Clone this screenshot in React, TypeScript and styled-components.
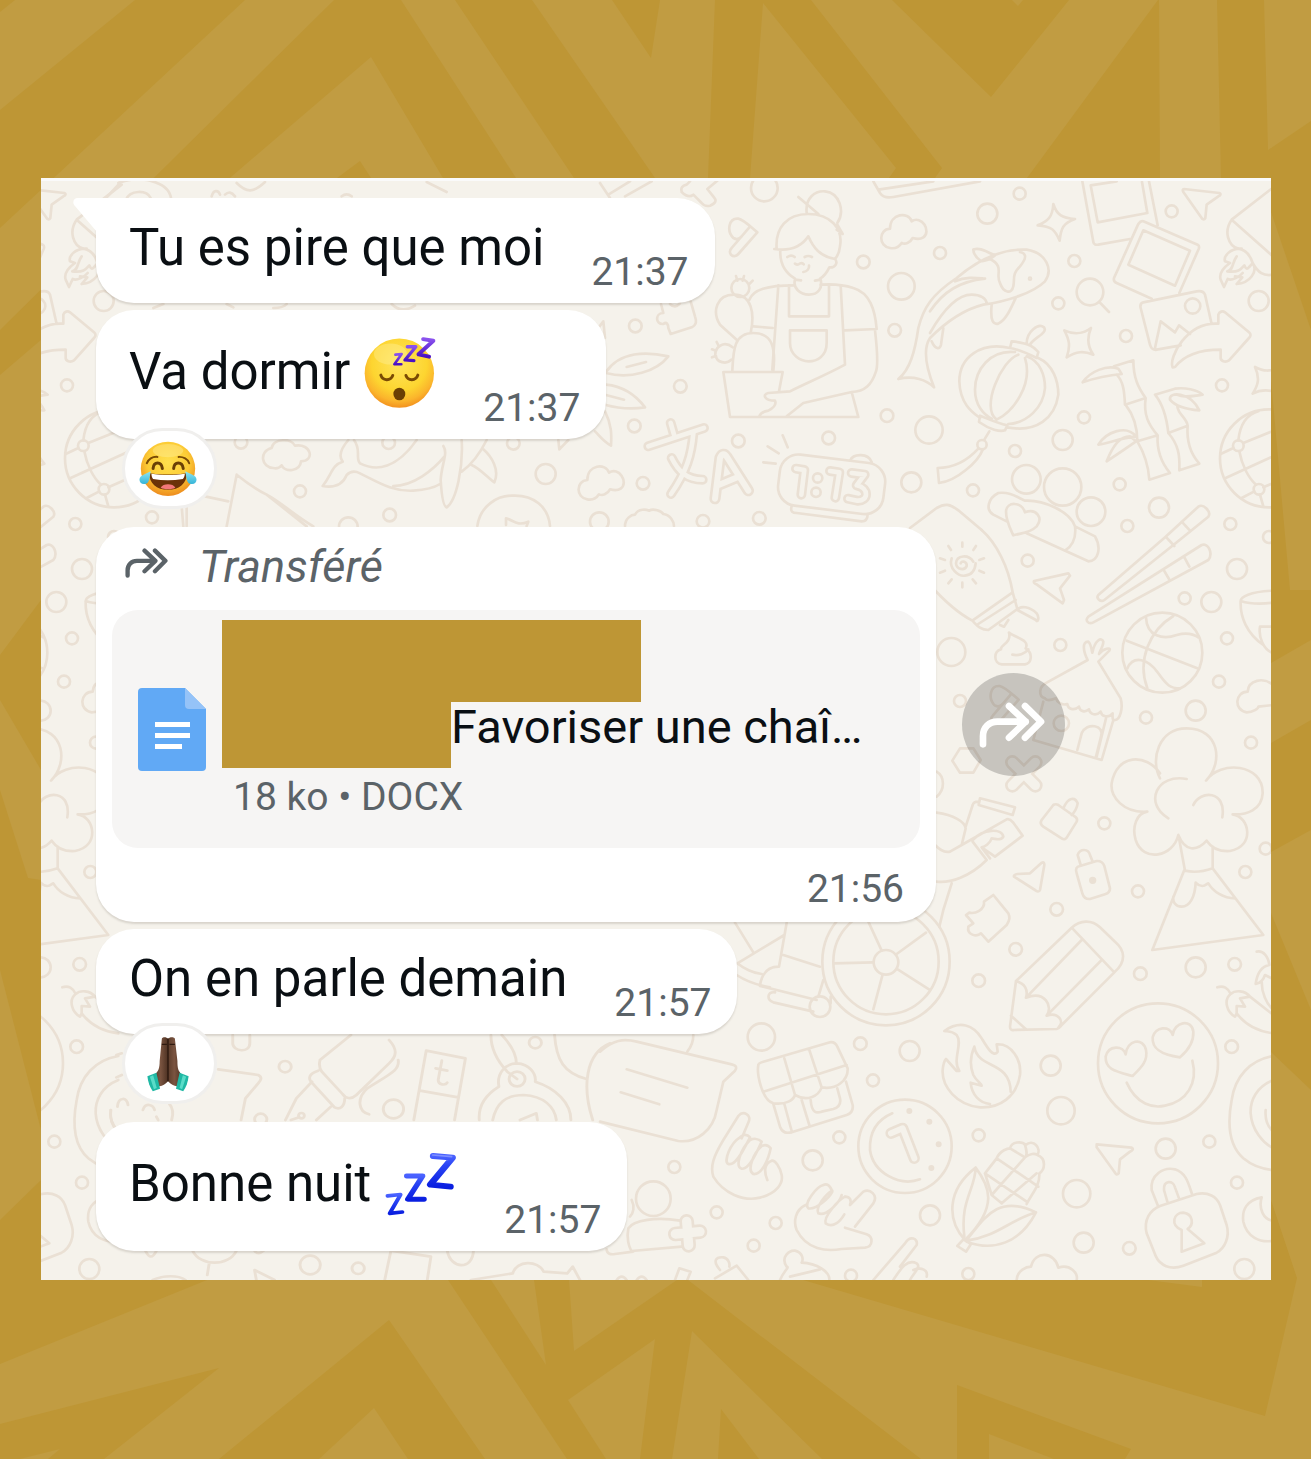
import React from "react";
import styled, { createGlobalStyle } from "styled-components";

const GOLD = "#be9635";
const GOLD_LIGHT = "#c19c42";
const PAPER = "#f5f2eb";
const DOODLE = "#eae0d4";
const INK = "#0a0f13";
const MUTED = "#5b6368";

const GlobalStyle = createGlobalStyle`
  *, *::before, *::after { box-sizing: border-box; }
  body { margin: 0; background: ${GOLD}; font-family: Roboto, "Liberation Sans", sans-serif; }
`;

const Page = styled.main`
  position: relative;
  min-height: 100vh;
  padding: 178px 40px 179px 41px;
  background: ${GOLD};
  overflow: hidden;
`;

const Backdrop = styled.svg`
  position: absolute;
  inset: 0;
  width: 100%;
  height: 100%;
`;

const Chat = styled.section`
  position: relative;
  padding: 20px 16px 29px 55px;
  background: ${PAPER};
  overflow: hidden;
`;

const Wallpaper = styled.svg`
  position: absolute;
  inset: 0;
  width: 100%;
  height: 100%;
  border-top: 3px solid #fafafa;
`;

const Thread = styled.ol`
  position: relative;
  display: flex;
  flex-direction: column;
  gap: 7px;
  margin: 0;
  padding: 0;
  list-style: none;
`;

const Row = styled.li<{ $reacted?: boolean }>`
  display: flex;
  align-items: center;
  gap: 26px;
  margin-bottom: ${(p) => (p.$reacted ? 81 : 0)}px;
`;

const bubbleShadow = "0 2px 2px rgba(120, 110, 95, 0.22)";

const Bubble = styled.article<{ $first?: boolean }>`
  position: relative;
  display: flex;
  align-items: flex-end;
  gap: 47px;
  padding: 20px 26px 8px 33px;
  border-radius: ${(p) => (p.$first ? "0 38px 38px 38px" : "38px")};
  background: #fff;
  box-shadow: ${bubbleShadow};
`;

const Tail = styled.svg`
  position: absolute;
  top: 0;
  left: -23px;
  width: 24px;
  height: 36px;
`;

const Message = styled.p<{ $tall?: boolean }>`
  display: flex;
  align-items: center;
  gap: 14px;
  min-height: ${(p) => (p.$tall ? 84 : 60)}px;
  margin: 0 0 17px;
  color: ${INK};
  font-size: 51px;
  line-height: 60px;
  white-space: nowrap;
`;

const Time = styled.time`
  color: ${MUTED};
  font-size: 39px;
  line-height: 46px;
`;

const Reaction = styled.button`
  position: absolute;
  top: calc(100% - 11px);
  left: 26px;
  display: flex;
  align-items: center;
  justify-content: center;
  width: 95px;
  height: 81px;
  padding: 0 3px 0 0;
  border: 3px solid #f0efed;
  border-radius: 41px;
  background: #fff;
`;

const FileBubble = styled.article`
  flex: 0 1 840px;
  min-width: 0;
  padding: 0 16px;
  border-radius: 38px;
  background: #fff;
  box-shadow: ${bubbleShadow};
`;

const Forwarded = styled.header`
  display: flex;
  align-items: center;
  gap: 31px;
  padding: 0 13px 4px;
  color: ${MUTED};
  font-size: 45px;
  font-style: italic;
  line-height: 79px;

  svg { margin-top: -8px; }
`;

const FileCard = styled.a`
  display: flex;
  align-items: center;
  gap: 16px;
  padding: 10px 26px 22px;
  border-radius: 26px;
  background: #f6f5f4;
  color: ${INK};
  text-decoration: none;
`;

const FileIcon = styled.svg`
  flex: none;
  width: 68px;
  height: 83px;
  margin-top: 12px;
`;

const FileInfo = styled.div`
  flex: 1;
  min-width: 0;
`;

const Redaction = styled.div<{ $width: number; $height: number }>`
  flex: none;
  width: ${(p) => p.$width}px;
  height: ${(p) => p.$height}px;
  background: ${GOLD};
`;

const FileName = styled.div`
  display: flex;
  font-size: 47px;
  line-height: 50px;
  white-space: nowrap;
`;

const FileMeta = styled.div`
  padding-left: 11px;
  color: ${MUTED};
  font-size: 39px;
  line-height: 58px;
`;

const FileFooter = styled.footer`
  display: flex;
  justify-content: flex-end;
  padding: 18px 16px 10px;
`;

const ForwardButton = styled.button`
  display: flex;
  flex: none;
  align-items: center;
  justify-content: center;
  width: 103px;
  height: 103px;
  padding: 0 3px 0 0;
  border: 0;
  border-radius: 50%;
  background: rgba(0, 0, 0, 0.19);
  color: #fff;
`;

function ForwardIcon({ width, height }: { width: number; height: number }) {
  return (
    <svg width={width} height={height} viewBox="150 513 198 138" fill="none" stroke="currentColor" strokeWidth="20" strokeLinecap="round" strokeLinejoin="round" aria-hidden="true">
      <path d="M162 640V615C162 590 180 572 205 572H290M240 525L290 572L240 620M288 525L336 572L288 620" />
    </svg>
  );
}

function SleepingEmoji() {
  return (
    <svg width="72" height="73" viewBox="970 468 218 220" role="img" aria-label="😴">
      <defs>
        <radialGradient id="sleepFace" cx=".5" cy=".36" r=".66">
          <stop offset="0" stopColor="#ffe45c" />
          <stop offset=".6" stopColor="#fdd530" />
          <stop offset=".82" stopColor="#fbb52c" />
          <stop offset="1" stopColor="#f18a1c" />
        </radialGradient>
        <linearGradient id="sleepZ" x1="0" y1="0" x2="0" y2="1">
          <stop offset="0" stopColor="#8a52ee" />
          <stop offset="1" stopColor="#4a10c4" />
        </linearGradient>
      </defs>
      <circle cx="1077" cy="580" r="105" fill="url(#sleepFace)" />
      <ellipse cx="1050" cy="522" rx="50" ry="32" fill="#fff3a8" opacity=".35" />
      <path d="M1021 586C1026 603 1050 605 1057 587M1097 587C1103 604 1127 604 1133 586" fill="none" stroke="#7a4a04" strokeWidth="9" strokeLinecap="round" />
      <ellipse cx="1077" cy="643" rx="18" ry="19" fill="#6b3f04" />
      <g fill="none" stroke="url(#sleepZ)" strokeLinejoin="round" strokeLinecap="round">
        <path strokeWidth="8" d="M1065 524L1084 522L1062 553L1083 553" />
        <path strokeWidth="10" d="M1101 500L1127 500L1094 540L1121 542" />
        <path strokeWidth="12" d="M1149 477L1180 482L1135 523L1167 530" />
      </g>
    </svg>
  );
}

function JoyEmoji() {
  return (
    <svg width="58" height="56" viewBox="299 793 174 169" role="img" aria-label="😂">
      <defs>
        <radialGradient id="joyFace" cx=".5" cy=".38" r=".64">
          <stop offset="0" stopColor="#ffe04e" />
          <stop offset=".6" stopColor="#fccb35" />
          <stop offset="1" stopColor="#ec861c" />
        </radialGradient>
        <linearGradient id="tear" x1="0" y1="0" x2="0" y2="1">
          <stop offset="0" stopColor="#8ee6f3" />
          <stop offset="1" stopColor="#35b4d8" />
        </linearGradient>
      </defs>
      <circle cx="386" cy="877" r="82" fill="url(#joyFace)" />
      <ellipse cx="386" cy="822" rx="46" ry="20" fill="#fff0a0" opacity=".4" />
      <path d="M322 860C328 848 340 840 354 841M418 841C432 840 446 848 450 860" fill="none" stroke="#7a4a04" strokeWidth="6" strokeLinecap="round" />
      <path d="M341 876C343 854 366 854 369 876M403 876C405 854 429 854 432 876" fill="none" stroke="#6a4006" strokeWidth="9" strokeLinecap="round" />
      <path d="M330 890C360 895 412 895 442 890C444 920 420 940 386 940C352 940 328 920 330 890Z" fill="#6b3208" />
      <path d="M336 892C366 897 406 897 437 892C436 900 434 904 431 908C400 913 370 913 341 908C338 904 336 899 336 892Z" fill="#fff" />
      <path d="M364 934C370 920 402 920 408 934C398 940 374 940 364 934Z" fill="#f27879" />
      <path d="M334 884C330 900 332 922 315 923C300 924 296 908 304 900C312 892 324 890 334 884Z" fill="url(#tear)" />
      <path d="M438 884C442 900 440 922 457 923C472 924 476 908 468 900C460 892 448 890 438 884Z" fill="url(#tear)" />
    </svg>
  );
}

function PrayEmoji() {
  return (
    <svg width="42" height="56" viewBox="296 50 116 168" preserveAspectRatio="none" role="img" aria-label="🙏🏿">
      <defs>
        <linearGradient id="skin" x1="0" y1="0" x2="1" y2="0">
          <stop offset="0" stopColor="#5b3d2c" />
          <stop offset=".45" stopColor="#7a5440" />
          <stop offset="1" stopColor="#4c3122" />
        </linearGradient>
      </defs>
      <path d="M337 58C338 52 350 52 354 58V186C345 196 336 203 327 200L317 166C328 156 331 146 331 125Z" fill="url(#skin)" />
      <path d="M373 58C372 52 358 52 354 58V186C363 196 374 203 383 200L393 166C382 156 380 146 380 125Z" fill="url(#skin)" />
      <path d="M354 58V186M337 75H351M358 75H373" fill="none" stroke="#2e1a10" strokeWidth="4" />
      <path d="M297 171L322 160L332 208L312 216C303 203 299 187 297 171Z" fill="#1fb8a4" />
      <path d="M411 171L386 160L376 208L396 216C405 203 409 187 411 171Z" fill="#1fb8a4" />
      <path d="M304 172L313 168L323 206L315 210ZM404 172L395 168L386 206L393 210Z" fill="#5adcc8" />
    </svg>
  );
}

function ZzzEmoji() {
  return (
    <svg width="72" height="64" viewBox="954 385 199 194" preserveAspectRatio="none" role="img" aria-label="💤">
      <defs>
        <linearGradient id="zBlue" x1="0" y1="0" x2="0" y2="1">
          <stop offset="0" stopColor="#4a62ff" />
          <stop offset=".3" stopColor="#2a45f5" />
          <stop offset="1" stopColor="#0a1fe0" />
        </linearGradient>
      </defs>
      <g fill="none" stroke="url(#zBlue)" strokeLinejoin="round" strokeLinecap="round">
        <path strokeWidth="11" d="M961 518L997 514L967 571L1002 567" />
        <path strokeWidth="15" d="M1014 458L1058 458L1017 528L1062 528" />
        <path strokeWidth="18" d="M1087 397L1141 402L1079 484L1135 490" />
      </g>
      <path d="M1086 394L1138 399" stroke="#7d8fff" strokeWidth="5" strokeLinecap="round" />
    </svg>
  );
}

type Dot = [number, number, number];

function Rings({ at }: { at: Dot[] }) {
  return (
    <>
      {at.map(([x, y, r]) => (
        <circle key={`${x}-${y}`} cx={x} cy={y} r={r} />
      ))}
    </>
  );
}

/* A rounded stroke with a hollow middle, used for doodled letters and crosses. */
function Hollow({ d, size = 36 }: { d: string; size?: number }) {
  return (
    <>
      <path d={d} strokeWidth={size} />
      <path d={d} strokeWidth={size - 16} stroke={PAPER} />
    </>
  );
}

const Mallet = () => <path d="M400 180C380 160 385 120 415 122C430 125 445 140 472 163L415 228C400 245 380 225 395 210L448 148M400 180q15 8 25-5" />;
const Cloud = () => <path d="M870 210C835 205 835 155 870 152C870 105 925 100 935 130C965 110 995 160 970 178C960 185 945 182 938 180C930 195 915 200 905 195C895 210 880 212 870 210Z" />;

function GardenDoodles() {
  return (
    <g transform="translate(600 178) scale(.333333)">
      <Rings at={[[493, 30, 40], [790, 252, 19], [904, 325, 40], [884, 457, 19], [106, 444, 19], [241, 625, 19], [103, 744, 19], [415, 789, 19], [686, 780, 19], [861, 713, 19], [987, 756, 41], [934, 913, 30], [129, 916, 19], [478, 1021, 19], [309, 1030, 19], [421, 330, 27]]} />
      <path d="M398 508C370 485 345 510 346 530C350 555 380 560 394 545" />
      <path d="M25 50L90 10M75 55L155 10M0 15L30 60M245 40q-5-15 15-20l10-10M245 42q20 20 35 8l25 25q10 12 25 8q25-10 12-25l-20-25 30-25" />
      <path d="M820 10L840 45C850 60 865 60 880 57L1140 10M835 35L1000 10" />
      <Mallet />
      <Cloud />
      <path d="M620 105C615 60 645 38 675 40C720 45 735 100 712 135M595 57L655 108M530 212C525 150 560 108 625 108C690 108 730 150 720 205C718 222 712 235 705 243C660 235 640 210 625 175C605 205 570 220 523 213M712 140L728 168L710 155M541 215C538 265 565 290 585 302M705 243C715 255 705 270 688 268C680 285 672 295 660 302M603 307L585 305C578 330 600 350 627 350C655 350 668 330 662 305L645 308M562 237q12-8 22 0M614 237q10-6 22 0M585 257q8 6 14 0q8-4 12 2M610 282C622 280 628 272 627 263" />
      <path d="M448 365C460 335 500 322 583 322M662 320C690 318 730 320 760 330C810 345 825 395 830 453L735 457M535 322L517 575M567 322V415H687V320M722 322L735 560C680 590 620 615 570 640L505 645C485 650 495 668 525 668C530 680 520 690 505 698C490 700 482 705 478 715M825 457C830 500 835 560 828 580C815 620 795 640 755 642L610 675L560 715M755 642L775 717H390L370 582H548L537 640M460 445L518 450M570 457H680V495C680 535 650 550 626 550C600 550 570 530 570 495Z" />
      <path d="M410 485L360 440C335 400 350 350 402 350C455 350 465 405 452 465M397 578C400 520 400 465 460 465C520 465 527 515 520 578M408 294l4 14M432 294l-4 14M458 308l-10 10M350 492l6 12M336 514l12 4M336 538l12-4" />
      <path d="M183 378L190 405C165 405 165 440 190 438C200 430 205 440 205 450L212 468L275 448C290 440 290 430 285 415L272 370M210 378q15 15 30-2" />
      <path d="M18 582C60 520 140 520 205 535C170 580 90 605 18 585M80 567L138 552M18 620C70 625 110 655 135 688C90 695 50 690 15 680M15 650L72 665M15 700C35 740 35 770 33 803C10 790 0 775-15 760M-5 450L10 430L15 480" />
      <Hollow size={30} d="M145 805L312 750M212 735L222 770M280 765C275 830 260 880 213 948M215 840C235 880 260 905 308 905" />
      <Hollow size={34} d="M345 962L360 840C366 826 374 826 380 836L445 938M358 920L412 898" />
      <rect x="536" y="842" width="318" height="154" rx="56" transform="rotate(7 695 918)" />
      <path d="M750 848C760 825 805 825 815 852M575 985C570 1000 578 1005 590 1005L785 1030C800 1030 803 1018 803 1008M548 772L563 808M503 805L536 826M490 853L527 857" />
      <circle cx="653" cy="900" r="14" /><circle cx="648" cy="943" r="14" />
      <Hollow size={30} d="M588 872L613 876L604 950M690 879L718 883L706 959M755 885L794 890L770 922C808 930 806 970 772 968L744 962" />
      <path d="M75 1045C75 1020 95 1010 105 1010C115 990 140 995 148 998C160 990 185 1000 190 1008C210 1010 222 1030 222 1045" />
    </g>
  );
}

function LanternDoodles() {
  return (
    <g transform="translate(930 178) scale(.333333)">
      <Rings at={[[269, 47, 18], [172, 107, 30], [30, 225, 18], [433, 249, 18], [385, 376, 18], [588, 474, 18], [725, 100, 18], [986, 369, 30], [876, 622, 18], [462, 718, 18], [398, 786, 30], [255, 819, 18], [129, 937, 18], [569, 919, 18], [687, 989, 30], [592, 1044, 18], [901, 1038, 18], [480, 342, 40], [156, 800, 14], [788, 384, 23], [289, 904, 43], [398, 927, 56], [483, 1001, 43], [1017, 841, 147], [925, 803, 16], [987, 934, 16]]} />
      <path d="M508 372L537 402M-95 603C-60 575-45 520-35 450C-20 390 5 350 80 300C150 240 220 212 290 215C350 225 370 275 345 310C310 345 230 370 160 380C100 395 40 440 0 480C-20 510-15 560 12 628C-10 605-50 592-95 603M130 215C150 205 175 225 195 232L180 243C165 248 155 252 150 247C135 235 130 225 130 215M75 310C110 295 140 300 165 302C90 310 40 340 0 400M0 465C20 430 70 350 125 350C150 350 170 360 170 378M185 380C180 430 190 440 205 437C230 425 245 385 258 358M180 243C225 265 195 290 210 315C220 345 245 350 250 325C255 300 245 290 270 265C295 235 285 225 270 222M5 490C15 515 30 515 33 500L40 450" />
      <circle cx="300" cy="302" r="3" />
      <path d="M240 510C150 490 88 540 88 610C90 680 130 705 150 720M325 540C370 560 385 610 385 650C375 720 320 765 232 748M255 522C180 515 135 575 135 635C135 680 160 710 185 722M290 535C330 550 345 590 345 630C340 690 290 735 235 738M265 530C215 545 150 690 200 725C250 700 310 620 285 540M240 510L245 490C300 495 315 510 325 522L320 540C300 530 270 515 240 510ZM290 497C290 460 325 435 342 448C355 465 310 480 300 500M150 713L147 732C180 755 210 762 225 757L232 742C200 735 180 725 150 713ZM178 760L163 785M145 812C110 850 70 870 23 870L27 915C80 910 145 850 158 815" />
      <path d="M370 78C380 110 395 120 435 123C400 135 393 150 389 188C375 155 365 145 323 142C355 130 368 115 370 78ZM403 457C430 470 460 468 483 450C470 480 472 505 490 530C460 518 440 520 410 538C422 505 418 485 403 457ZM1050 565C1020 583 1000 580 975 567C990 600 985 620 968 647C990 635 1010 635 1030 640" />
      <path d="M457 10L490 192C491 200 498 201 505 200L600 183M657 10L683 142M560 10L482 22L503 133L652 105L636 12M640 130L803 200C808 203 808 208 806 213L748 345M640 130C630 127 628 135 624 140L552 300C550 308 553 312 560 315L665 362M640 157L780 218L735 323L595 260ZM845 438L825 350C822 342 812 338 800 340L640 373C633 375 630 382 632 390L660 500C663 512 672 517 680 515L752 502M675 510L692 430L735 463L747 442L780 468M728 568C715 540 770 430 865 437V410C868 400 878 398 885 403L957 463C963 468 963 474 957 480L897 547C885 555 872 548 872 540V515C800 515 760 535 735 567Z" />
      <path d="M762 33L868 45C875 48 870 53 865 55L830 80L826 120C822 127 817 123 815 120L760 42C757 36 758 33 762 33Z" />
      <path d="M1040 20L905 125C880 160 895 205 925 212M905 125L1040 245M935 212C900 210 880 235 885 250L900 255C885 265 865 285 872 305L882 327L893 303C905 310 930 295 938 285M920 318C960 315 985 280 968 255C960 230 945 215 925 212M920 235C905 255 912 275 892 280C930 285 935 270 943 262C950 280 955 270 968 255M915 295L937 298L920 318M968 255C985 285 1000 295 1030 290" />
      <path d="M552 565L610 547C610 600 625 630 647 660L585 680C583 640 580 610 560 590M647 660C640 710 655 740 683 772L622 790C622 740 610 710 588 682M683 772C680 820 695 855 720 885L658 905C655 860 640 820 622 790M458 613C480 580 530 560 565 572L575 588C530 592 490 602 458 613M505 800C530 760 590 740 618 775C570 780 540 795 505 800ZM530 850C550 800 570 775 600 775L618 790C590 810 560 830 530 850M675 650L735 632M675 650C700 680 710 720 715 765L773 743C770 720 745 710 742 685M715 765C745 800 750 830 748 877L808 857C775 820 770 780 773 743M735 632C765 628 800 635 818 650C790 655 760 660 740 650M720 665C715 640 780 640 808 697C780 695 740 690 720 665Z" />
      <path d="M925 787C930 740 950 710 985 700M928 820C935 860 955 900 978 920M872 828L910 810M940 795L1120 722M887 900L1150 780M973 940L935 960M1000 928L1150 862M990 950L1000 985" />
      <path d="M230 1030L190 1010C165 995 175 960 205 945C240 940 265 960 285 968C340 965 420 1000 435 1045C440 1085 425 1105 405 1118M435 1045L495 1075C515 1110 505 1150 475 1150L290 1066M228 1000C230 970 275 970 285 1003C320 990 340 1020 320 1045C300 1065 275 1065 250 1072C240 1050 228 1030 228 1000" />
      <path d="M-60 1050L20 990C45 975 60 978 85 997L155 1056" />
    </g>
  );
}

function KiteDoodles() {
  return (
    <g transform="translate(930 530) scale(.333333)">
      <Rings at={[[293, 92, 18], [921, 117, 30], [764, 205, 18], [844, 216, 30], [891, 325, 18], [391, 345, 18], [64, 366, 42], [867, 455, 18], [797, 542, 30], [648, 563, 18], [963, 638, 18], [523, 880, 18], [624, 1084, 18], [946, 1026, 18], [1007, 956, 18], [394, 580, 23], [90, 513, 18], [1017, 21, 18], [697, 368, 120]]} />
      <path d="M505 195L707 20L805-70C820-80 845-55 835-40L733 43L523 210C512 218 497 205 505 195M707 20L733 48M755-25L780 2M475 260L815 45C835 38 850 70 835 90L490 277C475 285 463 270 475 260M700 118L717 147M762 80L778 110" />
      <path d="M155 0C200 40 235 110 248 187L127 272C85 250 45 215 0 165M248 187L262 237L175 300C150 300 140 285 127 272M257 210L140 285M262 240C270 225 300 230 320 250C330 265 322 280 318 270L262 240M210 285L222 290L235 270" />
      <path d="M92 100C95 90 112 95 110 108C105 122 80 120 78 100C80 75 115 72 130 95M65 85C55 115 85 140 105 137C125 135 135 120 137 100M97 38V50M97 158V172M30 85L45 90M30 128L45 122M148 90L162 85M148 122L162 128M55 48L63 60M138 48L130 60M55 160L65 148M138 160L128 148" />
      <path d="M415 130L312 153C310 158 315 162 320 163L398 220L402 210L390 175L420 137ZM237 308C260 325 300 330 287 355C310 370 305 400 285 403H215C190 400 190 365 213 358C210 345 245 340 237 308M247 374C265 378 285 372 295 358" />
      <path d="M1030 182C960 185 930 200 932 215C930 260 950 310 1000 345M932 213C960 222 1000 222 1030 218M1030 290L990 290C985 320 1000 360 1030 370" />
      <path d="M590 332L802 415M730 258C660 300 620 390 652 475M648 262C650 320 700 330 740 315C775 305 795 315 805 322M592 415C610 375 655 385 685 430C710 465 720 475 750 475" />
      <path d="M350 458L473 390C460 365 455 335 475 335C485 345 485 365 487 368C495 330 515 320 520 335C520 350 505 370 507 372C520 355 545 350 538 362L505 395L572 505C580 535 570 570 555 570C545 575 548 550 548 550C535 565 515 560 512 545C500 558 480 555 477 538C465 548 450 545 447 530C435 542 415 540 412 522C395 528 380 515 378 505C365 510 350 515 345 505C325 500 325 470 350 458ZM340 515L310 630L515 690L550 570M500 680L528 565M442 660L455 610C470 575 525 585 513 620L498 680" />
      <g transform="translate(-206 346)"><Mallet /></g>
      <path d="M90 655H130L152 690L130 728H90L67 692ZM20 725C45 740 45 780 20 800M1030 465C1000 440 955 450 953 485C915 485 910 540 950 547C970 547 985 535 985 530L1030 525" />
      <Hollow size={44} d="M247 697L316 766M316 697L247 766" />
      <path d="M690 745C660 690 685 595 770 595C870 595 880 700 828 752C870 690 1000 700 998 790C995 840 950 855 908 853C960 860 975 950 900 963C870 965 845 955 830 932C800 965 765 965 745 915C730 980 640 1000 617 930C605 890 620 850 652 845C580 850 540 800 545 760C560 670 650 670 690 730M770 747C680 730 640 820 715 865M790 825C810 780 890 780 877 862M748 930L765 1022C790 1028 820 1025 848 1015V950M762 1022L667 1260L1000 1215L848 1015M797 1058C820 1080 830 1060 835 1060C850 1085 880 1105 915 1105M797 1058C795 1100 780 1130 755 1130C735 1130 728 1115 730 1100" />
      <path d="M370 825L335 870C330 878 333 885 340 890L395 925C402 930 408 928 412 920L440 875C443 868 440 862 432 858L385 825C380 822 375 822 370 825M400 835C415 800 435 800 443 820C440 840 430 850 425 855M440 1030C435 1015 440 1010 450 1008L500 993C515 992 520 1000 523 1008L540 1075C540 1085 535 1090 525 1093L480 1107C468 1108 460 1100 457 1090ZM452 1005L443 975C450 955 475 955 480 975L488 995" />
      <circle cx="488" cy="1051" r="7" fill={DOODLE} />
      <path d="M20 848C70 855 105 875 107 895L95 945L60 965C40 970 25 955 15 945M107 890L128 825C130 818 138 815 145 815M150 805L255 832L248 855L146 825ZM95 945L230 868C240 865 245 872 250 878L278 917L195 980L155 952M128 935L170 990C120 1040 60 1060 20 1055M65 1060L40 1140L28 1190M128 930C160 895 215 895 220 920C210 935 195 925 185 925C180 940 165 950 155 952L180 985" />
      <path d="M252 1040C250 1035 258 1033 262 1032L300 1030L335 998C342 995 343 1000 343 1005L330 1080C328 1087 320 1085 315 1080Z" />
    </g>
  );
}

function SmileyDoodles() {
  return (
    <g transform="translate(930 900) scale(.333333)">
      <Rings at={[[380, 28, 19], [257, 148, 19], [146, 242, 19], [631, 221, 19], [797, 202, 30], [914, 193, 19], [905, 440, 19], [362, 497, 30], [393, 632, 41], [146, 706, 18], [707, 746, 30], [838, 725, 18], [921, 848, 18], [440, 881, 41], [461, 1028, 30], [598, 1045, 19], [943, 1107, 30], [115, 1122, 18], [0, 946, 30], [684, 490, 180]]} />
      <path d="M108 45L118 38C135 42 165 30 162 5L190-15L235 40C240 52 240 58 230 75L175 125L153 100C140 112 110 105 115 80L130 70Z" />
      <path d="M425 83L258 243L240 380C240 388 245 392 252 390L380 387C388 385 390 380 395 375L553 217C590 185 585 150 555 125L510 82C485 58 450 60 425 83L553 217M455 120L288 293C345 270 370 320 350 347C385 335 405 365 385 383M515 180L350 347M258 243C285 250 295 270 288 293M243 347L287 387" />
      <path d="M43 393C90 360 130 375 155 415C170 440 190 475 203 455L200 433C245 430 275 480 270 525C260 590 210 625 150 622C80 615 35 560 38 510C40 490 45 480 48 477L80 513L88 513C65 480 100 430 80 405C65 392 55 395 43 393ZM133 440C120 470 120 500 130 525C140 545 155 550 155 557L122 548C125 585 150 610 180 612M133 440C145 510 240 480 242 575" />
      <path d="M608 528C560 515 525 510 527 470C535 435 580 435 587 463C590 420 640 410 648 450C655 485 630 505 608 528ZM750 472C700 465 665 450 668 412C675 380 720 375 728 405C732 365 785 355 790 395C792 430 770 455 750 472ZM590 548C620 615 670 625 705 617C770 605 805 550 787 482" />
      <path d="M862 262C880 255 895 265 902 282C880 300 890 335 915 350L920 340C950 380 990 395 1030 400M902 282C915 270 945 270 960 290L930 295L945 320L920 318L920 345M960 290L1030 345M980 155C1000 150 1015 170 1018 195C990 200 980 230 977 252C990 250 1000 240 1005 225L1025 235M995 245C995 280 1010 310 1025 325" />
      <path d="M1030 468C960 480 915 530 905 600C890 680 900 740 940 775C970 800 1000 808 1030 810M1030 540C980 560 960 600 962 640C965 690 1000 730 1030 745M1007 630C1005 655 1010 675 1025 690" />
      <path d="M500 733L605 743C612 747 607 752 600 755L570 778L566 820C560 827 556 820 553 815L500 742ZM995 892C950 900 935 930 940 965C950 1010 990 1030 1030 1022M995 892C985 925 1000 960 1030 962" />
      <path d="M685 920L665 870C660 825 700 800 735 808C770 820 775 850 787 885M712 905L702 870C700 840 730 840 735 862L747 895M690 918L800 882C835 875 860 890 870 915L890 975C900 1010 885 1045 860 1058L760 1097C720 1112 690 1095 678 1070L650 1000C640 960 660 930 690 918ZM755 990C720 975 730 938 760 938C790 942 792 975 773 987L823 1030L755 1055Z" />
      <path d="M105 1020C50 960 50 870 137 803C180 860 205 920 105 1020ZM137 803C135 870 90 900 103 1010M110 1020C160 960 200 880 318 937C270 1030 190 1055 110 1025M318 937C240 960 200 1010 110 1022M100 1018L82 1038L108 1055L123 1032ZM165 820L200 775C210 750 235 745 240 745C245 725 275 722 287 735C310 715 335 745 322 765C350 775 345 810 328 820C330 860 305 880 290 912M165 820L185 885L215 910M240 745L285 772C300 760 315 760 322 765M285 772C295 765 285 735 285 735M200 775L325 860M165 820L290 905M285 772L185 885M320 820L215 910" />
      <path d="M260 1140C262 1110 290 1100 303 1100C315 1050 375 1055 385 1103C420 1090 445 1120 440 1140" />
    </g>
  );
}

function WheelDoodles() {
  return (
    <g transform="translate(600 900) scale(.333333)">
      <Rings at={[[858, 185, 191], [858, 185, 158], [858, 187, 37], [660, 320, 31], [484, 411, 41], [781, 431, 19], [929, 453, 30], [819, 541, 18], [718, 712, 18], [638, 781, 30], [223, 801, 18], [350, 937, 18], [527, 969, 18], [461, 1037, 18], [753, 1127, 18], [160, 896, 52], [915, 739, 140]]} />
      <path d="M845 152L805 65M890 162L978 98M893 208L987 268M848 223L820 328M820 187L702 190M405 68L460 157M560 68L537 200C500 200 485 225 480 255M412 190L553 105M412 190C430 205 460 220 485 222M410 225C440 245 470 255 510 262M550 165L660 200M480 258L650 300M640 335L520 307C500 300 500 275 525 277M670 240L655 290M692 290V310" />
      <path d="M0 455C40 420 70 415 110 425L395 493C412 497 410 505 405 512L370 545L350 630C340 690 290 730 235 723L0 665M80 508L262 563M62 577L178 613M280 405C280 425 270 445 262 455" />
      <path d="M475 495C470 520 485 600 520 610C560 615 580 600 585 585C620 605 655 590 665 562C710 570 745 540 743 505L712 440C705 425 695 425 685 428L490 485C480 488 475 492 475 495ZM490 575L740 495M553 475L585 585M628 450L665 562M520 612L540 680C548 700 560 700 575 697L740 645C755 640 760 630 758 615L738 545M553 612L575 693M605 600L628 675M632 600C635 640 650 640 665 635L700 627C722 620 722 605 720 595L712 565" />
      <path d="M415 648C430 630 455 645 446 665L425 715M415 648L370 720C340 770 330 800 340 830C370 880 430 905 480 893C530 880 550 850 545 825C540 800 525 780 515 782C495 790 490 810 502 840M420 712C390 730 370 785 385 792C410 800 440 730 450 712C440 700 425 705 420 712M450 720C420 750 405 800 425 806C450 810 475 745 485 725C475 715 460 715 450 720M485 738C460 760 440 810 460 822C485 825 505 780 512 745C505 735 495 733 485 738" />
      <path d="M960 838C900 860 820 820 810 750C808 700 830 660 877 640" />
      <Hollow size={34} d="M873 700L908 685L943 775" />
      <g fill={DOODLE}><Rings at={[[928, 633, 5], [988, 665, 5], [1016, 733, 5], [994, 804, 5]]} /></g>
      <path d="M617 915C585 930 580 965 590 990C620 1050 680 1055 725 1047L795 1043C820 1040 820 1010 800 1003L735 983M765 980L820 910C835 885 810 865 790 875L750 915C755 900 750 890 735 890M670 855C650 860 610 910 625 925C650 930 690 890 697 875C690 855 680 850 670 855M697 872C680 880 645 920 655 940C680 950 720 905 725 885M735 890C715 900 670 950 677 970C700 985 720 965 733 943" />
      <path d="M85 985C100 960 170 950 240 962M85 985C80 1010 85 1040 95 1053L245 1040M20 1048C20 1060 30 1065 45 1062L100 1055M95 900C105 920 100 940 90 950" />
      <Hollow size={44} d="M260 964L266 1036M226 1002L300 995" />
      <path d="M820 1140L915 1030C930 1005 955 1015 950 1035L900 1100M880 1140C900 1110 920 1075 950 1090C965 1100 940 1120 930 1140M940 1110C965 1100 985 1110 980 1130M540 1140C550 1115 570 1100 560 1100C540 1070 570 1050 585 1052C610 1058 610 1080 605 1088C650 1090 690 1115 688 1140M570 1130L660 1108M345 1135L410 1097L445 1140M360 1110C335 1080 350 1070 370 1072C385 1075 390 1090 388 1100M225 1140L238 1105L272 1115L262 1140M50 1140q15-20 30 0M110 1140q15-20 30 0" />
    </g>
  );
}

function WhaleDoodles() {
  return (
    <>
      <g transform="translate(300 420) scale(.333333)">
        <Rings at={[[266, 68, 19], [640, 70, 19], [737, 162, 30], [0, 214, 18], [269, 285, 19], [898, 305, 28], [145, 320, 28]]} />
        <g transform="translate(-8 28)"><Cloud /></g>
        <path d="M162 60C185 90 165 115 180 130C230 155 290 145 350 60M145 60C115 95 120 115 128 125C95 135 95 165 68 198C110 205 130 190 140 165C155 150 170 155 180 160C240 190 280 215 340 212C370 210 400 205 420 192M280 198C340 198 400 150 433 110M430 78C445 100 425 130 422 180C425 230 430 260 440 262C470 240 490 140 485 60M485 155C520 130 540 100 560 60M515 135C540 145 570 180 583 187C600 150 575 110 550 88M532 318C540 260 590 225 640 227C700 225 745 260 750 318M618 315V295C640 300 650 320 685 305L680 318M775 60L778 88L805 60" />
      </g>
      <g transform="translate(40 178) scale(.333333)">
        <Rings at={[[603, 793, 19], [336, 1018, 18]]} />
        <path d="M700 870C665 870 655 820 695 810C700 780 755 780 765 803C815 795 825 850 783 850C780 880 735 885 725 862C718 870 708 872 700 870ZM590 890L560 1045M590 890C640 930 660 940 680 950C720 970 760 1010 820 1045M680 950L800 1045M470 950L565 970M425 985L430 1045M440 985V1045" />
        <path d="M235 15C300-10 385 10 393 60M258 65C270 35 320 35 332 60M175 85L240 15M515 55C520 35 535 35 540 50M555 50q15-15 30 5M590 15C620 45 640 45 675 12M905 55q15-12 30 0M1160 12l60 30M340 390L370 378M560 378l20 10M1055 378q30 30 70 5M700 390q30 0 40-12" />
      </g>
    </>
  );
}

function PenDoodles() {
  return (
    <g transform="translate(40 1020) scale(.363636 .333333)">
      <Rings at={[[674, 140, 17], [607, 298, 17], [972, 267, 28], [1362, 68, 17], [743, 735, 28], [875, 745, 17], [719, 287, 8], [1312, 177, 22]]} />
      <path d="M530 45V70C530 95 577 100 577 70V45M490 148L600 165C612 172 608 180 600 190L565 235L553 300M770 120L855 45M960 60C985 90 980 110 960 130L870 225C855 240 840 235 832 222L775 155C765 140 768 130 770 120M765 152C740 160 738 175 745 185L810 262C825 270 838 260 838 235M748 185L705 235L675 300M800 260L760 300M690 300L713 292M985 120C990 150 965 160 900 205C870 235 875 275 905 283" />
      <path d="M1028 300L1062 92L1170 115L1140 300M1045 212L1150 232M1105 122L1095 180C1095 195 1115 197 1120 188M1088 145L1120 152" />
      <path d="M1240 45C1240 80 1255 120 1285 155L1312 177M1270 45C1300 80 1310 110 1310 130M1208 300C1205 260 1225 225 1262 200C1255 160 1280 130 1312 130C1345 132 1365 160 1362 185C1420 205 1460 250 1460 300M1245 300C1255 250 1280 225 1330 225C1385 228 1415 260 1420 300M1320 300L1365 280L1368 300M1415 45C1420 120 1440 160 1505 178M1568 70C1500 100 1490 200 1520 300" />
      <path d="M213 260C215 230 240 230 242 255M283 270C290 245 312 255 315 270M195 270C190 300 200 310 205 320M320 290L325 300M210 172L225 165M355 250C370 270 365 290 362 300M210 105L225 100" />
      <path d="M290 692q15 35 30 0M420 692C440 740 520 740 540 692M465 732L460 765M590 692q10 15 25 0M948 780L965 692L1075 710L1065 780M1120 692C1130 750 1190 750 1192 692M1185 780L1300 760C1310 720 1370 720 1385 755L1450 760L1465 740L1485 780M595 780L590 750L645 780M310 780C340 765 380 765 400 780" />
    </g>
  );
}

function DoodleWallpaper() {
  return (
    <Wallpaper aria-hidden="true">
      <g transform="translate(-41 -181)" fill="none" stroke={DOODLE} strokeWidth="8" strokeLinecap="round" strokeLinejoin="round">
        <g id="edge-doodles">
          <LanternDoodles />
          <KiteDoodles />
          <SmileyDoodles />
        </g>
        <use href="#edge-doodles" x="-1155" />
        <GardenDoodles />
        <WheelDoodles />
        <WhaleDoodles />
        <PenDoodles />
      </g>
    </Wallpaper>
  );
}

const facets = [
  "15,0 135,0 0,110 0,12",
  "245,0 334,0 0,330 0,228",
  "371,57 443,178 371,178 360,161 337,178 230,178 0,375 0,655 41,600 41,340",
  "401,0 455,0 574,178 516,178",
  "532,0 612,0 651,58 660,0 715,0 708,178 655,178",
  "763,3 896,168 889,178 750,178",
  "811,0 892,0 991,97 1069,0 1158,0 1027,178 935,178 942,168",
  "1012,0 1023,0 1018,6",
  "1159,0 1217,0 1221,178 1160,178",
  "1264,0 1311,0 1311,121 1268,150",
  "0,700 41,770 41,880 28,878 0,790",
  "0,970 41,1130 41,1180 0,1220",
  "1271,212 1311,330 1311,590 1290,590 1271,380",
  "1271,663 1311,640 1311,720 1271,743",
  "1271,852 1311,830 1311,1010 1271,913",
  "1271,1052 1311,1090 1311,1278 1297,1278 1271,1200",
  "207,1280 0,1364 0,1424 219,1368 104,1459 219,1459 389,1320 485,1459 567,1459 448,1280",
  "20,1459 60,1449 48,1459",
  "319,1459 374,1408 408,1459",
  "491,1280 534,1280 546,1365",
  "569,1280 677,1280 574,1351",
  "655,1339 568,1400 606,1459 640,1459",
  "692,1331 672,1459 718,1459 721,1409 759,1459 822,1459",
  "688,1280 803,1280 1265,1416 1297,1278 1311,1278 1311,1459 1125,1459 1131,1449 957,1385 957,1459 921,1459",
  "989,1434 1054,1459 989,1459",
  "1148,1280 1202,1280 1202,1287",
];

export default function App() {
  return (
    <>
      <GlobalStyle />
      <Page>
        <Backdrop viewBox="0 0 1311 1459" preserveAspectRatio="xMidYMid slice" aria-hidden="true">
          {facets.map((points) => (
            <polygon key={points} points={points} fill={GOLD_LIGHT} />
          ))}
        </Backdrop>
        <Chat>
          <DoodleWallpaper />
          <Thread>
            <Row>
              <Bubble $first>
                <Tail viewBox="0 0 24 36" aria-hidden="true">
                  <path d="M24 0H5C0 0-1 5 2 8L24 34Z" fill="#fff" />
                </Tail>
                <Message>Tu es pire que moi</Message>
                <Time>21:37</Time>
              </Bubble>
            </Row>
            <Row $reacted>
              <Bubble>
                <Message $tall>
                  Va dormir
                  <SleepingEmoji />
                </Message>
                <Time>21:37</Time>
                <Reaction type="button">
                  <JoyEmoji />
                </Reaction>
              </Bubble>
            </Row>
            <Row>
              <FileBubble>
                <Forwarded>
                  <ForwardIcon width={43} height={30} />
                  Transféré
                </Forwarded>
                <FileCard href="#document">
                  <FileIcon viewBox="0 0 68 83" aria-hidden="true">
                    <path d="M4 0H47L68 21V79Q68 83 64 83H4Q0 83 0 79V4Q0 0 4 0Z" fill="#61a9f5" />
                    <path d="M47 0L68 21H51Q47 21 47 17Z" fill="#95c3f8" />
                    <path d="M17 34H52V39H17ZM17 45H52V50H17ZM17 56H44V61H17Z" fill="#fff" />
                  </FileIcon>
                  <FileInfo>
                    <Redaction $width={419} $height={82} />
                    <FileName>
                      <Redaction $width={229} $height={66} />
                      Favoriser une chaî…
                    </FileName>
                    <FileMeta>18 ko • DOCX</FileMeta>
                  </FileInfo>
                </FileCard>
                <FileFooter>
                  <Time>21:56</Time>
                </FileFooter>
              </FileBubble>
              <ForwardButton type="button" aria-label="Transférer">
                <ForwardIcon width={66} height={46} />
              </ForwardButton>
            </Row>
            <Row $reacted>
              <Bubble>
                <Message>On en parle demain</Message>
                <Time>21:57</Time>
                <Reaction type="button">
                  <PrayEmoji />
                </Reaction>
              </Bubble>
            </Row>
            <Row>
              <Bubble>
                <Message $tall>
                  Bonne nuit
                  <ZzzEmoji />
                </Message>
                <Time>21:57</Time>
              </Bubble>
            </Row>
          </Thread>
        </Chat>
      </Page>
    </>
  );
}
